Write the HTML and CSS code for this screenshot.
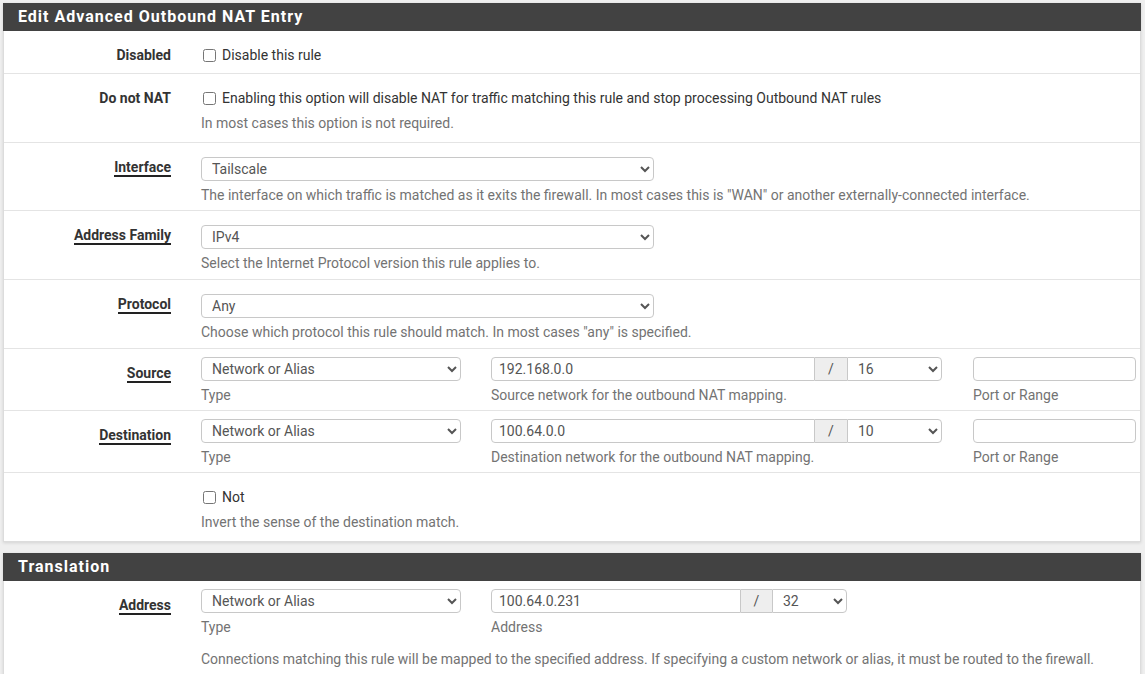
FILE: index.html
```html
<!DOCTYPE html>
<html>
<head>
<meta charset="utf-8">
<link rel="stylesheet" href="styles.css">
</head>
<body>
<div class="page">
  <div class="panel">
    <div class="panel-heading">Edit Advanced Outbound NAT Entry</div>
    <div class="panel-body">
      <div class="row row-check row-first">
        <div class="label">Disabled</div>
        <div class="ctrl">
          <label class="check"><input type="checkbox"> <span>Disable this rule</span></label>
        </div>
      </div>
      <div class="row row-check">
        <div class="label">Do not NAT</div>
        <div class="ctrl">
          <label class="check"><input type="checkbox"> <span>Enabling this option will disable NAT for traffic matching this rule and stop processing Outbound NAT rules</span></label>
          <div class="help">In most cases this option is not required.</div>
        </div>
      </div>
      <div class="row row-select row-select-first">
        <div class="label"><span class="req">Interface</span></div>
        <div class="ctrl">
          <select class="sel sel-wide"><option>Tailscale</option></select>
          <div class="help">The interface on which traffic is matched as it exits the firewall. In most cases this is "WAN" or another externally-connected interface.</div>
        </div>
      </div>
      <div class="row row-select">
        <div class="label"><span class="req">Address Family</span></div>
        <div class="ctrl">
          <select class="sel sel-wide"><option>IPv4</option></select>
          <div class="help">Select the Internet Protocol version this rule applies to.</div>
        </div>
      </div>
      <div class="row row-select">
        <div class="label"><span class="req">Protocol</span></div>
        <div class="ctrl">
          <select class="sel sel-wide"><option>Any</option></select>
          <div class="help">Choose which protocol this rule should match. In most cases "any" is specified.</div>
        </div>
      </div>
      <div class="row row-multi">
        <div class="label label-pad"><span class="req">Source</span></div>
        <div class="ctrl ctrl-multi">
          <div class="col col-type">
            <select class="sel"><option>Network or Alias</option></select>
            <div class="help">Type</div>
          </div>
          <div class="col col-addr">
            <div class="input-group">
              <input class="inp inp-grow" type="text" value="192.168.0.0">
              <span class="addon">/</span>
              <select class="sel sel-mask"><option>16</option></select>
            </div>
            <div class="help">Source network for the outbound NAT mapping.</div>
          </div>
          <div class="col col-port">
            <input class="inp" type="text" value="">
            <div class="help">Port or Range</div>
          </div>
        </div>
      </div>
      <div class="row row-multi">
        <div class="label label-pad"><span class="req">Destination</span></div>
        <div class="ctrl ctrl-multi">
          <div class="col col-type">
            <select class="sel"><option>Network or Alias</option></select>
            <div class="help">Type</div>
          </div>
          <div class="col col-addr">
            <div class="input-group">
              <input class="inp inp-grow" type="text" value="100.64.0.0">
              <span class="addon">/</span>
              <select class="sel sel-mask"><option>10</option></select>
            </div>
            <div class="help">Destination network for the outbound NAT mapping.</div>
          </div>
          <div class="col col-port">
            <input class="inp" type="text" value="">
            <div class="help">Port or Range</div>
          </div>
        </div>
      </div>
      <div class="row row-check row-last">
        <div class="label"></div>
        <div class="ctrl">
          <label class="check"><input type="checkbox"> <span>Not</span></label>
          <div class="help">Invert the sense of the destination match.</div>
        </div>
      </div>
    </div>
  </div>

  <div class="panel">
    <div class="panel-heading">Translation</div>
    <div class="panel-body">
      <div class="row row-multi row-trans">
        <div class="label label-pad"><span class="req">Address</span></div>
        <div class="ctrl">
          <div class="ctrl-multi">
            <div class="col col-type">
              <select class="sel"><option>Network or Alias</option></select>
              <div class="help">Type</div>
            </div>
            <div class="col col-addr2">
              <div class="input-group">
                <input class="inp inp-grow" type="text" value="100.64.0.231">
                <span class="addon addon2">/</span>
                <select class="sel sel-mask2"><option>32</option></select>
              </div>
              <div class="help">Address</div>
            </div>
          </div>
          <div class="help help-far">Connections matching this rule will be mapped to the specified address. If specifying a custom network or alias, it must be routed to the firewall.</div>
        </div>
      </div>
    </div>
  </div>
</div>
</body>
</html>
```

FILE: styles.css
```css
* { box-sizing: border-box; }
html, body {
  margin: 0;
  padding: 0;
  background: #efefef;
  font-family: Roboto, "Liberation Sans", sans-serif;
  font-size: 14px;
  color: #333;
}
.page {
  padding: 3px 4px 0 3px;
  display: flex;
  flex-direction: column;
  gap: 11px;
}
.panel {
  background: #fff;
  border: 1px solid #dcdcdc;
  border-top: none;
  box-shadow: 0 1px 3px rgba(0,0,0,0.12);
}
.panel-heading {
  background: #424242;
  color: #fff;
  font-weight: 700;
  font-size: 16px;
  letter-spacing: 1px;
  height: 28px;
  line-height: 28px;
  padding-left: 15px;
  margin: 0 -1px;
}
.row {
  display: flex;
  border-bottom: 1px solid #e4e4e4;
}
.row-last, .row-trans { border-bottom: none; }
.label {
  width: 197px;
  flex: none;
  padding-right: 30px;
  text-align: right;
  font-weight: 700;
  line-height: 20px;
  color: #333;
}
.req {
  border-bottom: 2px solid #222;
  padding-bottom: 0;
}
.ctrl { flex: 1; line-height: 20px; }
.help {
  color: #737373;
  line-height: 20px;
  margin-top: 4px;
}
.row-check { padding: 14px 0 9px; }
.row-first { padding-bottom: 8px; }
.row-check .help { margin-top: 5px; }
.row-select { padding: 14px 0 6px; }
.row-select-first { padding-bottom: 5px; }
.row-multi { padding: 8px 0 5px; }
.label-pad { padding-top: 6px; }
.check {
  display: flex;
  align-items: center;
  gap: 6px;
  color: #333;
}
.check input {
  margin: 0 0 0 2px;
  width: 13px;
  height: 13px;
}
.sel, .inp {
  height: 24px;
  border: 1px solid #c8c8c8;
  border-radius: 4px;
  font-family: Roboto, "Liberation Sans", sans-serif;
  font-size: 14px;
  color: #555;
  background: #fff;
  padding: 0 6px 0 6px;
  margin: 0;
  display: block;
}
.sel-wide { width: 453px; }
.ctrl-multi { display: flex; }
.col-type { width: 260px; margin-right: 30px; }
.col-type .sel { width: 260px; }
.col-addr { width: 451px; margin-right: 31px; }
.col-addr2 { width: 356px; }
.col-port { width: 163px; }
.col-port .inp { width: 163px; }
.input-group { display: flex; }
.inp-grow {
  flex: 1;
  min-width: 0;
  border-radius: 4px 0 0 4px;
  padding-left: 7px;
  color: #555;
}
.addon {
  width: 32px;
  flex: none;
  height: 24px;
  background: #eee;
  border-top: 1px solid #c8c8c8;
  border-bottom: 1px solid #c8c8c8;
  text-align: center;
  line-height: 22px;
  color: #555;
}
.addon2 { width: 31px; }
.sel-mask {
  width: 95px;
  flex: none;
  border-radius: 0 4px 4px 0;
  padding-left: 6px;
}
.sel-mask2 {
  width: 75px;
  flex: none;
  border-radius: 0 4px 4px 0;
  padding-left: 6px;
}
.row-trans { padding-bottom: 6px; }
.help-far { margin-top: 12px; }
```
